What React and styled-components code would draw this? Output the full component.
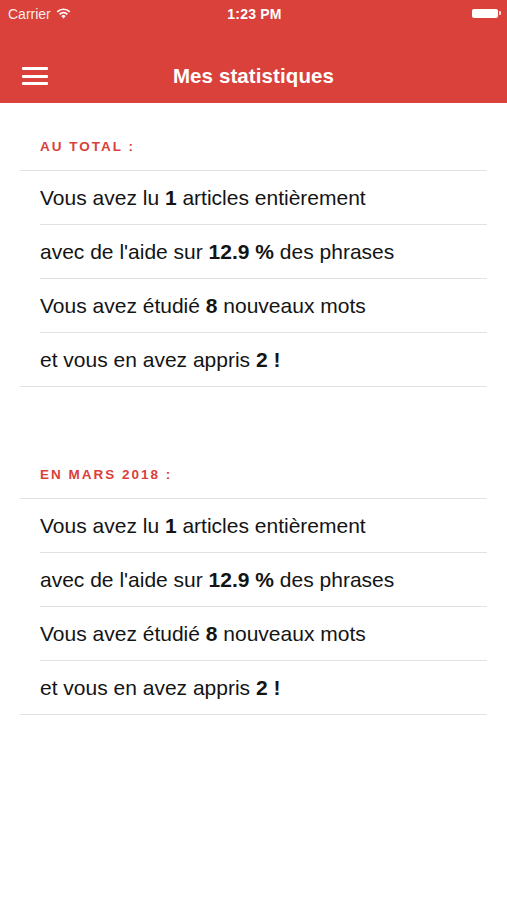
import React from "react";
import styled, { createGlobalStyle } from "styled-components";

const GlobalStyle = createGlobalStyle`
  html, body {
    margin: 0;
    padding: 0;
    background: #ffffff;
  }
  body {
    font-family: "Liberation Sans", Arial, sans-serif;
    -webkit-font-smoothing: antialiased;
  }
`;

const RED = "#d9413a";

const Screen = styled.div`
  width: 507px;
  min-height: 900px;
  background: #ffffff;
`;

const Header = styled.header`
  background: ${RED};
  height: 103px;
  display: flex;
  flex-direction: column;
  color: #ffffff;
`;

const StatusBar = styled.div`
  height: 27px;
  display: grid;
  grid-template-columns: 1fr auto 1fr;
  align-items: center;
  padding: 0 6px 0 8px;
  font-size: 14px;
`;

const Carrier = styled.div`
  display: flex;
  align-items: center;
  gap: 5px;
  color: rgba(255, 255, 255, 0.92);
`;

const Time = styled.div`
  font-weight: bold;
  letter-spacing: 0.2px;
`;

const Battery = styled.div`
  justify-self: end;
  display: flex;
  align-items: center;
  margin-top: -1px;
`;

const BatteryBody = styled.div`
  width: 26px;
  height: 9px;
  background: #ffffff;
  border-radius: 2px;
`;

const BatteryNub = styled.div`
  width: 2px;
  height: 4px;
  margin-left: 1px;
  background: rgba(255, 255, 255, 0.8);
  border-radius: 0 1px 1px 0;
`;

const NavBar = styled.div`
  flex: 1;
  display: flex;
  align-items: center;
  justify-content: center;
  position: relative;
  padding-top: 22px;
`;

const MenuButton = styled.button`
  position: absolute;
  left: 22px;
  top: 67px;
  top: calc(50% + 11px);
  transform: translateY(-50%);
  width: 26px;
  height: 18px;
  padding: 0;
  border: none;
  background: transparent;
  display: flex;
  flex-direction: column;
  justify-content: space-between;
`;

const MenuBar = styled.span`
  display: block;
  height: 3px;
  background: #ffffff;
  border-radius: 1px;
`;

const NavTitle = styled.h1`
  margin: 0;
  font-size: 20.5px;
  font-weight: bold;
  letter-spacing: 0.1px;
`;

const Content = styled.main`
  padding: 36px 20px 0;
  display: flex;
  flex-direction: column;
  gap: 80px;
`;

const Section = styled.section``;

const SectionTitle = styled.h2`
  margin: 0 0 15px 20px;
  font-size: 13.5px;
  line-height: 16px;
  font-weight: bold;
  letter-spacing: 2px;
  color: ${RED};
`;

const List = styled.ul`
  list-style: none;
  margin: 0;
  padding: 0;
  border-top: 1px solid #e2e2e2;
  border-bottom: 1px solid #e2e2e2;
`;

const Row = styled.li`
  padding-left: 20px;
  & + & > div {
    border-top: 1px solid #e2e2e2;
  }
`;

const Cell = styled.div`
  height: 53px;
  line-height: 53px;
  font-size: 21px;
  color: #141414;
  white-space: nowrap;
  b {
    font-weight: bold;
  }
`;

const WifiIcon = () => (
  <svg width="15" height="11" viewBox="0 0 15 11">
    <path d="M7.5 10.5 L5.3 8.1 A3.2 3.2 0 0 1 9.7 8.1 Z" fill="#fff" />
    <path
      d="M3.6 6.3 A5.6 5.6 0 0 1 11.4 6.3"
      stroke="#fff"
      strokeWidth="1.7"
      fill="none"
    />
    <path
      d="M1.3 3.8 A8.8 8.8 0 0 1 13.7 3.8"
      stroke="#fff"
      strokeWidth="1.7"
      fill="none"
    />
  </svg>
);

const stats = [
  <>Vous avez lu <b>1</b> articles entièrement</>,
  <>avec de l'aide sur <b>12.9 %</b> des phrases</>,
  <>Vous avez étudié <b>8</b> nouveaux mots</>,
  <>et vous en avez appris <b>2 !</b></>,
];

const sections = ["AU TOTAL :", "EN MARS 2018 :"];

const App = () => {
  return (
    <Screen>
      <GlobalStyle />
      <Header>
        <StatusBar>
          <Carrier>
            Carrier
            <WifiIcon />
          </Carrier>
          <Time>1:23 PM</Time>
          <Battery>
            <BatteryBody />
            <BatteryNub />
          </Battery>
        </StatusBar>
        <NavBar>
          <MenuButton aria-label="menu">
            <MenuBar />
            <MenuBar />
            <MenuBar />
          </MenuButton>
          <NavTitle>Mes statistiques</NavTitle>
        </NavBar>
      </Header>
      <Content>
        {sections.map((title) => (
          <Section key={title}>
            <SectionTitle>{title}</SectionTitle>
            <List>
              {stats.map((line, i) => (
                <Row key={i}>
                  <Cell>{line}</Cell>
                </Row>
              ))}
            </List>
          </Section>
        ))}
      </Content>
    </Screen>
  );
};

export default App;
